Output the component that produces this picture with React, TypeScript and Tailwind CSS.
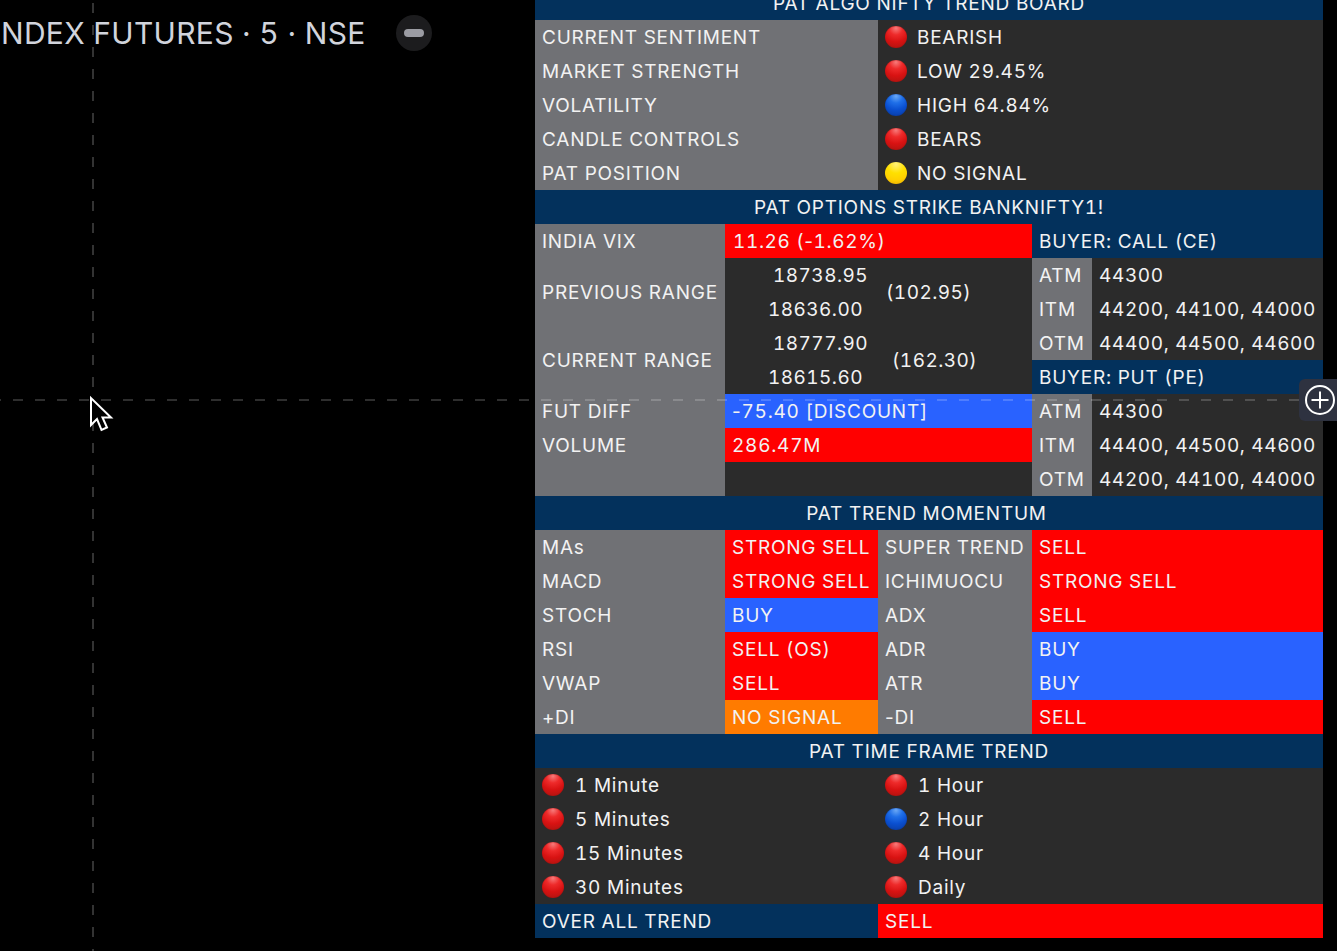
import type { ReactNode } from "react";

type Tone = "navy" | "grey" | "dark" | "red" | "blue" | "orange";

const toneClass: Record<Tone, string> = {
  navy: "bg-[#03315c]",
  grey: "bg-[#707175]",
  dark: "bg-[#2b2b2b]",
  red: "bg-[#ff0000]",
  blue: "bg-[#2962ff]",
  orange: "bg-[#ff7b00]",
};

const ballClass = {
  red: "bg-[radial-gradient(circle_at_50%_10%,#f77a7a_0%,#ee2a2a_30%,#d81212_60%,#a81510_100%)] shadow-[inset_0_0_1px_#8a1010]",
  blue: "bg-[radial-gradient(circle_at_50%_10%,#6aa8f5_0%,#1f6fe8_30%,#0a4fd0_60%,#0a3a9c_100%)] shadow-[inset_0_0_1px_#0a2f80]",
  yellow: "bg-[radial-gradient(circle_at_50%_10%,#fff27a_0%,#ffe000_40%,#ffd000_70%,#eaa800_100%)]",
};

function Ball({ color }: { color: keyof typeof ballClass }) {
  return <span className={`w-[22px] h-[22px] mt-[-2px] rounded-full flex-shrink-0 ${ballClass[color]}`} />;
}

function Cell({
  tone,
  span,
  rows,
  children,
}: {
  tone: Tone;
  span: string;
  rows?: string;
  children?: ReactNode;
}) {
  return (
    <div className={`flex items-center px-[7px] pt-[2px] whitespace-nowrap ${toneClass[tone]} ${span} ${rows ?? ""}`}>
      {children}
    </div>
  );
}

function Header({ shift, children }: { shift?: string; children: ReactNode }) {
  return (
    <div className="col-span-5 flex items-center justify-center pt-[2px] bg-[#03315c] whitespace-nowrap">
      <span className={shift}>{children}</span>
    </div>
  );
}

function Range({ high, low, diff, gap }: { high: string; low: string; diff: string; gap: string }) {
  return (
    <div className="col-span-2 row-span-2 flex items-center bg-[#2b2b2b] whitespace-nowrap tracking-[0.45px]">
      <div className="ml-[43px] w-[100px] flex flex-col">
        <span className="h-[34px] leading-[36px] text-right">{high}</span>
        <span className="h-[34px] leading-[36px] text-left">{low}</span>
      </div>
      <span className={`mt-[2px] ${gap}`}>{diff}</span>
    </div>
  );
}

function Strikes({ children }: { children: ReactNode }) {
  return <span className="tracking-[0.62px]">{children}</span>;
}

function Minus() {
  return <span className="normal-nums">-</span>;
}

const sentiment: { label: string; ball: keyof typeof ballClass; value: string }[] = [
  { label: "CURRENT SENTIMENT", ball: "red", value: "BEARISH" },
  { label: "MARKET STRENGTH", ball: "red", value: "LOW 29.45%" },
  { label: "VOLATILITY", ball: "blue", value: "HIGH 64.84%" },
  { label: "CANDLE CONTROLS", ball: "red", value: "BEARS" },
  { label: "PAT POSITION", ball: "yellow", value: "NO SIGNAL" },
];

const momentum: { a: string; av: string; at: Tone; b: ReactNode; bv: string; bt: Tone }[] = [
  { a: "MAs", av: "STRONG SELL", at: "red", b: "SUPER TREND", bv: "SELL", bt: "red" },
  { a: "MACD", av: "STRONG SELL", at: "red", b: "ICHIMUOCU", bv: "STRONG SELL", bt: "red" },
  { a: "STOCH", av: "BUY", at: "blue", b: "ADX", bv: "SELL", bt: "red" },
  { a: "RSI", av: "SELL (OS)", at: "red", b: "ADR", bv: "BUY", bt: "blue" },
  { a: "VWAP", av: "SELL", at: "red", b: "ATR", bv: "BUY", bt: "blue" },
  { a: "+DI", av: "NO SIGNAL", at: "orange", b: <span className="normal-nums">-DI</span>, bv: "SELL", bt: "red" },
];

const frames: { a: string; ac: keyof typeof ballClass; b: string; bc: keyof typeof ballClass }[] = [
  { a: "1 Minute", ac: "red", b: "1 Hour", bc: "red" },
  { a: "5 Minutes", ac: "red", b: "2 Hour", bc: "blue" },
  { a: "15 Minutes", ac: "red", b: "4 Hour", bc: "red" },
  { a: "30 Minutes", ac: "red", b: "Daily", bc: "red" },
];

export default function App() {
  return (
    <div className="relative w-[1337px] h-[951px] overflow-hidden bg-black font-['Inter','Liberation_Sans',sans-serif] text-[19px] tracking-[0.76px] tabular-nums text-[#f2f2f2]">
      {/* chart title */}
      <div className="absolute left-[1px] top-[13px] flex items-center text-[30px] leading-[40px] tracking-[0.3px] text-[#d1d4dc] whitespace-nowrap">
        <span>NDEX FUTURES · 5 · NSE</span>
        <span className="ml-[30px] w-[36px] h-[36px] rounded-full bg-[#1c1c1e] flex items-center justify-center">
          <span className="w-[20px] h-[8px] rounded-full bg-[#9b9ca3]" />
        </span>
      </div>

      {/* trend board */}
      <div className="ml-[535px] mt-[-14px] w-[788px] grid grid-cols-[190px_153px_154px_60px_231px] auto-rows-[34px]">
        <Header>PAT ALGO NIFTY TREND BOARD</Header>
        {sentiment.map((row) => (
          <div key={row.label} className="contents">
            <Cell tone="grey" span="col-span-2">{row.label}</Cell>
            <Cell tone="dark" span="col-span-3">
              <Ball color={row.ball} />
              <span className="ml-[10px]">{row.value}</span>
            </Cell>
          </div>
        ))}

        <Header>PAT OPTIONS STRIKE BANKNIFTY1!</Header>
        <Cell tone="grey" span="col-span-1">INDIA VIX</Cell>
        <Cell tone="red" span="col-span-2">
          <span className="ml-[1px] tracking-[0.62px]">11.26 (<Minus />1.62%)</span>
        </Cell>
        <Cell tone="navy" span="col-span-2">BUYER: CALL (CE)</Cell>

        <Cell tone="grey" span="col-span-1" rows="row-span-2">PREVIOUS RANGE</Cell>
        <Range high="18738.95" low="18636.00" diff="(102.95)" gap="ml-[18px]" />
        <Cell tone="grey" span="col-span-1">ATM</Cell>
        <Cell tone="dark" span="col-span-1"><Strikes>44300</Strikes></Cell>
        <Cell tone="grey" span="col-span-1">ITM</Cell>
        <Cell tone="dark" span="col-span-1"><Strikes>44200, 44100, 44000</Strikes></Cell>

        <Cell tone="grey" span="col-span-1" rows="row-span-2">CURRENT RANGE</Cell>
        <Range high="18777.90" low="18615.60" diff="(162.30)" gap="ml-[24px]" />
        <Cell tone="grey" span="col-span-1">OTM</Cell>
        <Cell tone="dark" span="col-span-1"><Strikes>44400, 44500, 44600</Strikes></Cell>
        <Cell tone="navy" span="col-span-2">BUYER: PUT (PE)</Cell>

        <Cell tone="grey" span="col-span-1">FUT DIFF</Cell>
        <Cell tone="blue" span="col-span-2"><span><Minus />75.40 [DISCOUNT]</span></Cell>
        <Cell tone="grey" span="col-span-1">ATM</Cell>
        <Cell tone="dark" span="col-span-1"><Strikes>44300</Strikes></Cell>
        <Cell tone="grey" span="col-span-1">VOLUME</Cell>
        <Cell tone="red" span="col-span-2">286.47M</Cell>
        <Cell tone="grey" span="col-span-1">ITM</Cell>
        <Cell tone="dark" span="col-span-1"><Strikes>44400, 44500, 44600</Strikes></Cell>
        <Cell tone="grey" span="col-span-1" />
        <Cell tone="dark" span="col-span-2" />
        <Cell tone="grey" span="col-span-1">OTM</Cell>
        <Cell tone="dark" span="col-span-1"><Strikes>44200, 44100, 44000</Strikes></Cell>

        <Header shift="mr-[5px]">PAT TREND MOMENTUM</Header>
        {momentum.map((row) => (
          <div key={row.a} className="contents">
            <Cell tone="grey" span="col-span-1">{row.a}</Cell>
            <Cell tone={row.at} span="col-span-1">{row.av}</Cell>
            <Cell tone="grey" span="col-span-1">{row.b}</Cell>
            <Cell tone={row.bt} span="col-span-2">{row.bv}</Cell>
          </div>
        ))}

        <Header>PAT TIME FRAME TREND</Header>
        {frames.map((row) => (
          <div key={row.a} className="contents">
            <Cell tone="dark" span="col-span-2">
              <Ball color={row.ac} />
              <span className="ml-[11px]">{row.a}</span>
            </Cell>
            <Cell tone="dark" span="col-span-3">
              <Ball color={row.bc} />
              <span className="ml-[11px]">{row.b}</span>
            </Cell>
          </div>
        ))}

        <Cell tone="navy" span="col-span-2">OVER ALL TREND</Cell>
        <Cell tone="red" span="col-span-3">SELL</Cell>
      </div>

      {/* crosshair */}
      <div className="absolute left-[92px] top-[-19px] w-[2px] h-[980px] bg-[repeating-linear-gradient(180deg,#333333_0,#333333_10px,transparent_10px,transparent_22px)]" />
      <div className="absolute left-[-9px] top-[399px] w-[1308px] h-[2px] bg-[repeating-linear-gradient(90deg,rgba(255,255,255,0.18)_0,rgba(255,255,255,0.18)_10px,transparent_10px,transparent_22px)]" />

      {/* zoom control */}
      <div className="absolute left-[1299px] top-[379px] w-[38px] h-[42px] pl-[5px] rounded-l-[6px] bg-[#2e3240] flex items-center">
        <svg width="32" height="32" viewBox="0 0 32 32" fill="none" stroke="#ffffff" strokeWidth="2">
          <circle cx="16" cy="16" r="14" />
          <path d="M16 7.5v17M7.5 16h17" />
        </svg>
      </div>

      {/* mouse pointer */}
      <svg className="absolute left-[88px] top-[395px]" width="26" height="38" viewBox="0 0 26 38" fill="#000000" stroke="#ffffff" strokeWidth="2" strokeLinejoin="miter">
        <path d="M3 3V30L9 24L13.5 35L19 32.5L14.5 22.5H23Z" />
      </svg>
    </div>
  );
}
